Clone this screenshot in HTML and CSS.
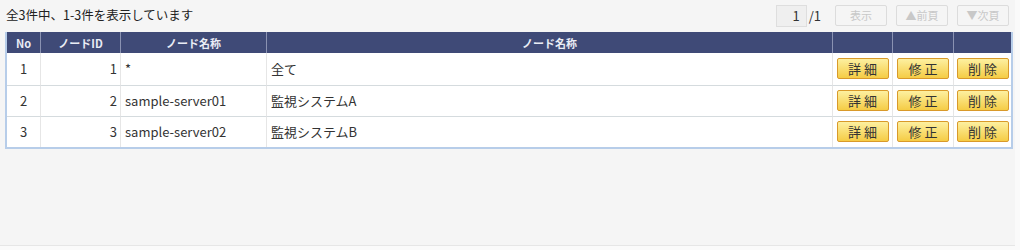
FILE: index.html
```html
<!DOCTYPE html>
<html lang="ja">
<head>
<meta charset="utf-8">
<link rel="stylesheet" href="styles.css">
</head>
<body>
<div class="page">
  <div class="toolbar">
    <div class="count">全3件中、1-3件を表示しています</div>
    <div class="pager">
      <span class="pagebox">1</span>
      <span class="total">/1</span>
      <span class="pbtn">表示</span>
      <span class="pbtn">▲前頁</span>
      <span class="pbtn">▼次頁</span>
    </div>
  </div>
  <table class="grid">
    <colgroup>
      <col class="c-no"><col class="c-id"><col class="c-name"><col class="c-name2"><col class="c-b1"><col class="c-b2"><col class="c-b3">
    </colgroup>
    <thead>
      <tr><th>No</th><th>ノードID</th><th>ノード名称</th><th>ノード名称</th><th></th><th></th><th></th></tr>
    </thead>
    <tbody>
      <tr><td class="no">1</td><td class="id">1</td><td>*</td><td>全て</td><td class="b"><span class="btn">詳細</span></td><td class="b"><span class="btn">修正</span></td><td class="b"><span class="btn">削除</span></td></tr>
      <tr><td class="no">2</td><td class="id">2</td><td>sample-server01</td><td>監視システムA</td><td class="b"><span class="btn">詳細</span></td><td class="b"><span class="btn">修正</span></td><td class="b"><span class="btn">削除</span></td></tr>
      <tr><td class="no">3</td><td class="id">3</td><td>sample-server02</td><td>監視システムB</td><td class="b"><span class="btn">詳細</span></td><td class="b"><span class="btn">修正</span></td><td class="b"><span class="btn">削除</span></td></tr>
    </tbody>
  </table>
</div>
</body>
</html>
```
FILE: styles.css
```css
html, body {
  margin: 0;
  padding: 0;
  background: #fafafa;
}
body {
  font-family: "Noto Sans CJK JP", "Noto Sans", sans-serif;
  font-size: 13px;
  color: #333;
  height: 250px;
  overflow: hidden;
}
.page {
  width: 1015px;
  height: 246px;
  background: #f5f5f5;
  border-bottom: 1px solid #e6e6e6;
  box-sizing: border-box;
}
.toolbar {
  height: 32px;
  display: flex;
  align-items: center;
  justify-content: space-between;
  padding: 0 6px 0 6px;
}
.count {
  font-size: 12.5px;
  margin-top: -3px;
  color: #222;
}
.pager {
  display: flex;
  align-items: center;
  margin-top: -1px;
}
.pagebox {
  width: 31px;
  height: 22px;
  box-sizing: border-box;
  border: 1px solid #dedede;
  background: #efefef;
  text-align: right;
  padding-right: 6px;
  line-height: 20px;
  color: #333;
}
.total {
  margin: 0 5px 0 2px;
  color: #333;
}
.pbtn {
  width: 52px;
  height: 21px;
  box-sizing: border-box;
  border: 1px solid #dcdcdc;
  border-radius: 2px;
  background: #f5f5f5;
  color: #c8c8c8;
  font-size: 11px;
  line-height: 19px;
  text-align: center;
  margin-left: 9px;
}
.pbtn:first-of-type { margin-left: 0; }
.grid {
  margin-left: 5px;
  width: 1008px;
  border-collapse: separate;
  border-spacing: 0;
  table-layout: fixed;
  background: #fff;
  border-left: 2px solid #b7cde9;
  border-right: 2px solid #b7cde9;
  border-bottom: 2px solid #b7cde9;
}
.c-no { width: 33px; }
.c-id { width: 80px; }
.c-name { width: 146px; }
.c-name2 { width: 566px; }
.c-b1 { width: 60px; }
.c-b2 { width: 61px; }
.c-b3 { width: 58px; }
.grid th {
  background: #3f4a77;
  color: #e9ecf5;
  font-weight: bold;
  font-size: 11px;
  height: 21px;
  padding: 0;
  border-left: 1px solid #8a92b2;
  text-align: center;
}
.grid th:first-child { border-left: none; }
.grid td {
  height: 28px;
  padding: 0 4px 2px 4px;
  border-top: 1px solid #d5dbde;
  border-left: 1px solid #e6e6e6;
  white-space: nowrap;
  color: #333;
}
.grid tbody tr:first-child td { border-top: none; height: 30px; }
.grid td:first-child { border-left: none; }
.grid td.no { text-align: center; }
.grid td.id { text-align: right; padding-right: 3px; }
.grid td.b { text-align: center; padding: 0 0 1px 0; }
.btn {
  display: inline-block;
  width: 52px;
  height: 21px;
  box-sizing: border-box;
  border: 1px solid #d99a2a;
  border-radius: 2px;
  background: linear-gradient(#fdf0a0, #f5cc45);
  color: #333;
  font-size: 13px;
  letter-spacing: 3px;
  line-height: 19px;
  text-align: center;
  vertical-align: middle;
  padding-left: 3px;
}
```
